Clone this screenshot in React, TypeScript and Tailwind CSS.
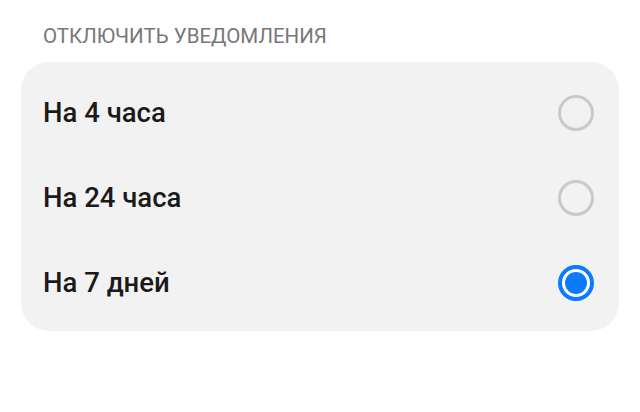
import React, { useState } from "react";

const options = ["На 4 часа", "На 24 часа", "На 7 дней"];

function Radio({ checked }: { checked: boolean }) {
  if (checked) {
    return (
      <span className="flex h-[36px] w-[36px] items-center justify-center rounded-full border-[4px] border-[#0a7bff] bg-white">
        <span className="h-[22px] w-[22px] rounded-full bg-[#0a7bff]" />
      </span>
    );
  }
  return <span className="block h-[36px] w-[36px] rounded-full border-[3px] border-[#c9c9c9]" />;
}

export default function App() {
  const [selected, setSelected] = useState(2);
  return (
    <div
      className="h-[412px] w-[640px] bg-white"
      style={{ fontFamily: "Roboto, 'Noto Sans', sans-serif" }}
    >
      <div className="px-[21px] pt-[22px]">
        <div className="pl-[22px] text-[20.5px] leading-[28px] text-[#777777]">
          ОТКЛЮЧИТЬ УВЕДОМЛЕНИЯ
        </div>
        <div className="mt-[12px] rounded-[28px] bg-[#f2f2f2] pt-[8px] pb-[6px]">
          {options.map((label, i) => (
            <button
              key={label}
              onClick={() => setSelected(i)}
              className="flex h-[85px] w-full items-center justify-between pl-[22px] pr-[25px] text-left"
            >
              <span className="text-[27.5px] font-medium text-[#1a1a1a]">{label}</span>
              <Radio checked={selected === i} />
            </button>
          ))}
        </div>
      </div>
    </div>
  );
}
